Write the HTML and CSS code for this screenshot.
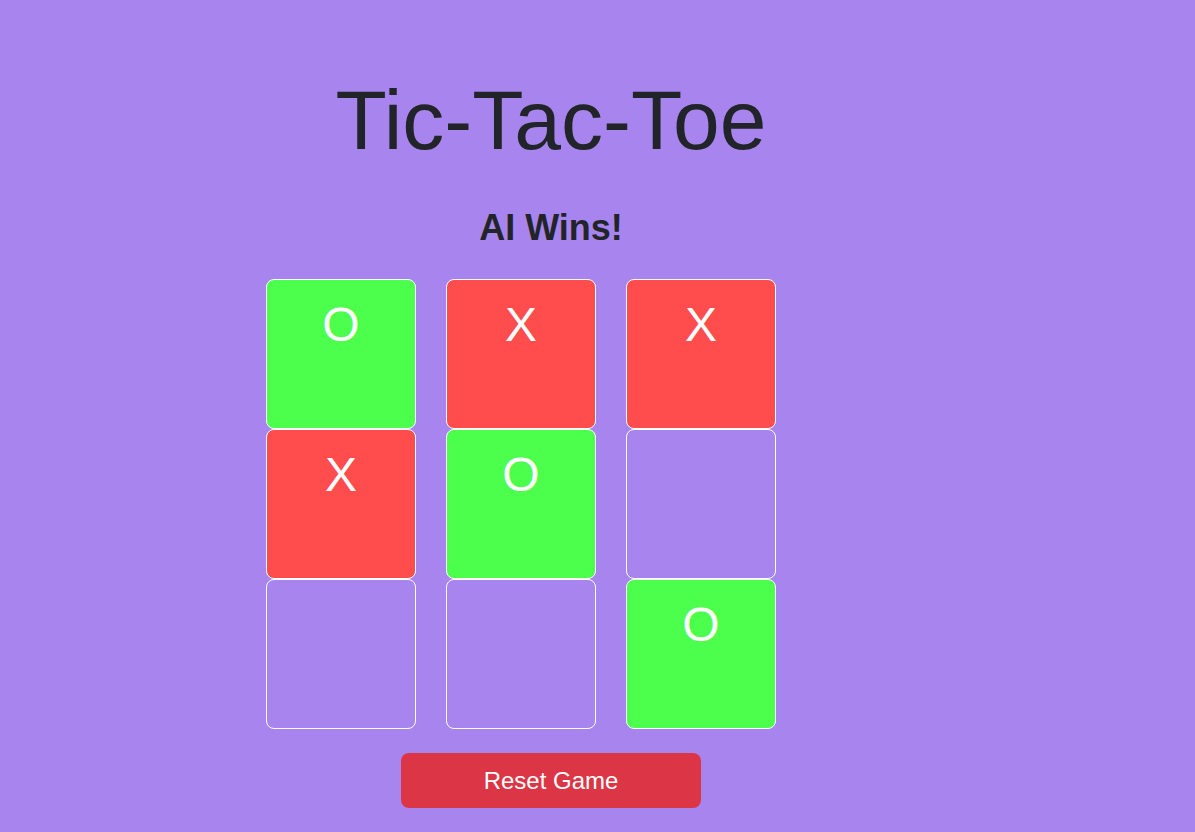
FILE: index.html
```html
<!DOCTYPE html>
<html lang="en">
<head>
<meta charset="utf-8">
<title>Tic-Tac-Toe</title>
<link rel="stylesheet" href="styles.css">
</head>
<body>
<main class="game">
  <h1 class="title">Tic-Tac-Toe</h1>
  <h2 class="status">AI Wins!</h2>
  <div class="board">
    <div class="cell cell-o">O</div>
    <div class="cell cell-x">X</div>
    <div class="cell cell-x">X</div>
    <div class="cell cell-x">X</div>
    <div class="cell cell-o">O</div>
    <div class="cell"></div>
    <div class="cell"></div>
    <div class="cell"></div>
    <div class="cell cell-o">O</div>
  </div>
  <button class="reset" type="button">Reset Game</button>
</main>
</body>
</html>
```

FILE: styles.css
```css
html, body {
  margin: 0;
  padding: 0;
}

body {
  background: #a885ee;
  color: #212529;
  font-family: "Liberation Sans", Arial, sans-serif;
  height: 832px;
  overflow: hidden;
}

.game {
  display: flex;
  flex-direction: column;
  align-items: center;
  padding: 70px 93px 0 0;
}

.title {
  margin: 0;
  font-size: 84px;
  font-weight: 400;
  line-height: 1.2;
}

.status {
  margin: 35px 0 0;
  font-size: 36px;
  font-weight: 700;
  line-height: 1.2;
}

.board {
  margin: 30px 60px 0 0;
  display: grid;
  grid-template-columns: repeat(3, 150px);
  grid-auto-rows: 150px;
  column-gap: 30px;
  row-gap: 0;
}

.cell {
  box-sizing: border-box;
  border: 1px solid #ffffff;
  border-radius: 8px;
  color: #ffffff;
  font-size: 48px;
  line-height: 1.5;
  padding-top: 9px;
  text-align: center;
}

.cell-o {
  background: #4cff4c;
}

.cell-x {
  background: #ff4d4d;
}

.reset {
  margin-top: 24px;
  width: 300px;
  height: 55px;
  padding: 2px 0 0;
  border: none;
  border-radius: 8px;
  background: #dc3545;
  color: #ffffff;
  font-family: "Liberation Sans", Arial, sans-serif;
  font-size: 24px;
  cursor: pointer;
}
```
